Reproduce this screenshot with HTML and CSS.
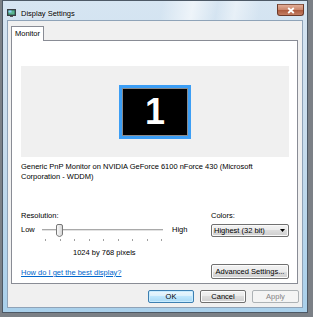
FILE: index.html
```html
<!DOCTYPE html>
<html>
<head>
<meta charset="utf-8">
<link rel="stylesheet" href="styles.css">
</head>
<body>
<div class="window">
  <div class="titlebar">
    <svg class="app-icon" width="9" height="8" viewBox="0 0 9 8"><rect x="0.5" y="0.5" width="8" height="6" fill="#2f5e52" stroke="#3a3f44"/><rect x="1.5" y="1.5" width="6" height="4" fill="#5bb58f"/><rect x="1.5" y="1.5" width="3" height="2" fill="#8fd0ff"/><rect x="3" y="7" width="3" height="1" fill="#555"/></svg>
    <span class="title">Display Settings</span>
    <div class="close"><svg width="8" height="7" viewBox="0 0 8 7"><path d="M1.2 1 L6.8 6 M6.8 1 L1.2 6" stroke="#fff" stroke-width="1.8"/></svg></div>
  </div>
  <div class="client">
    <div class="tabs"><div class="tab">Monitor</div></div>
    <div class="panel">
      <div class="preview"><div class="monitor">1</div></div>
      <p class="desc">Generic PnP Monitor on NVIDIA GeForce 6100 nForce 430 (Microsoft<br>Corporation - WDDM)</p>
      <div class="settings">
        <div class="res">
          <div class="label">Resolution:</div>
          <div class="slider-row">
            <span class="low">Low</span>
            <div class="slider">
              <svg class="thumb" width="7" height="13" viewBox="0 0 7 13"><defs><linearGradient id="tg" x1="0" y1="0" x2="1" y2="0"><stop offset="0" stop-color="#fdfdfd"/><stop offset="1" stop-color="#d2d2d2"/></linearGradient></defs><path d="M0.5 2 Q0.5 0.5 2 0.5 H5 Q6.5 0.5 6.5 2 V10 Q6.5 11 5.5 11.8 L3.5 12.5 L1.5 11.8 Q0.5 11 0.5 10 Z" fill="url(#tg)" stroke="#777"/></svg>
            </div>
            <span class="high">High</span>
          </div>
          <div class="ticks"><i></i><i></i><i></i><i></i><i></i><i></i><i></i><i></i><i></i></div>
          <div class="pixels">1024 by 768 pixels</div>
        </div>
        <div class="colors">
          <div class="label">Colors:</div>
          <div class="combo"><span>Highest (32 bit)</span><svg width="5" height="3" viewBox="0 0 5 3"><path d="M0 0H5L2.5 3Z" fill="#000"/></svg></div>
        </div>
      </div>
      <div class="footer-row">
        <a class="link" href="#">How do I get the best display?</a>
        <button class="btn adv">Advanced Settings...</button>
      </div>
    </div>
    <div class="buttons">
      <button class="btn default">OK</button>
      <button class="btn">Cancel</button>
      <button class="btn" disabled>Apply</button>
    </div>
  </div>
</div>
</body>
</html>
```

FILE: styles.css
```css
* { box-sizing: border-box; }
html, body { margin: 0; padding: 0; }
body {
  width: 313px;
  height: 317px;
  overflow: hidden;
  background: #7b8086;
  font-family: "Liberation Sans", Arial, sans-serif;
  font-size: 7.5px;
  line-height: 10px;
  color: #000;
}
.window {
  margin-left: 2px;
  width: 306px;
  height: 313px;
  border: 1px solid #4d5966;
  background: linear-gradient(180deg, #d6e5f2 0%, #c8dcec 45%, #a9d0eb 100%);
  display: flex;
  flex-direction: column;
}
.titlebar {
  height: 20px;
  display: flex;
  align-items: flex-start;
  padding: 0 3px 0 4px;
  background: linear-gradient(100deg, rgba(255,255,255,0) 52%, rgba(255,255,255,.6) 62%, rgba(255,255,255,0) 70%, rgba(255,255,255,.45) 76%, rgba(255,255,255,0) 84%);
}
.app-icon { margin-top: 8px; flex: none; }
.title { margin-top: 8px; margin-left: 5px; line-height: 10px; color: #000; text-shadow: 0 0 3px #fff; }
.close {
  margin-left: auto;
  margin-top: 3px;
  width: 27px;
  height: 12px;
  border: 1px solid #6b3a2a;
  border-top-color: #8a5a48;
  border-radius: 0 0 3px 3px;
  background: linear-gradient(180deg, #e2ad97 0%, #cd8a70 45%, #ad5c40 55%, #c47e63 100%);
  display: flex;
  align-items: center;
  justify-content: center;
}
.client {
  flex: 1;
  margin: 0 5px 5px;
  background: #f0f0f0;
  box-shadow: 0 0 0 1px #8fa3b8;
  padding: 5px 3px 4px 3px;
  display: flex;
  flex-direction: column;
}
.tabs { display: flex; height: 14px; }
.tab {
  position: relative;
  z-index: 1;
  height: 15px;
  padding: 0 3px;
  border: 1px solid #898c95;
  border-bottom: none;
  background: #fff;
  line-height: 13px;
}
.panel {
  margin-right: 1px;
  height: 244px;
  border: 1px solid #898c95;
  background: #fff;
  padding: 0 8px 4px 9px;
  display: flex;
  flex-direction: column;
}
.preview {
  margin-top: 25px;
  height: 91px;
  background: #f0f0f0;
  display: flex;
  align-items: center;
  justify-content: center;
}
.monitor {
  width: 72px;
  height: 54px;
  border: 3px solid #3c9ef5;
  background: #000;
  box-shadow: inset 0 0 0 1px #8a8a8a;
  display: flex;
  align-items: center;
  justify-content: center;
  color: #fff;
  font-family: "Liberation Sans", Arial, sans-serif;
  font-weight: bold;
  font-size: 36px;
  line-height: 1;
}
.desc { margin: 5px 0 0; }
.settings { margin-top: 29px; display: flex; justify-content: space-between; }
.res { display: flex; flex-direction: column; }
.slider-row { margin-top: 2px; height: 14px; display: flex; align-items: center; }
.low { width: 21px; }
.slider {
  width: 121px;
  height: 14px;
  display: flex;
  align-items: center;
  background:
    linear-gradient(#a9a9a9, #a9a9a9) 0 6px / 100% 1px no-repeat,
    linear-gradient(#e2e2e2, #e2e2e2) 0 7px / 100% 1px no-repeat;
}
.thumb { margin-left: 14px; }
.high { margin-left: 9px; }
.ticks {
  margin: 2px 0 0 24px;
  width: 117px;
  height: 2px;
  display: flex;
  justify-content: space-between;
}
.ticks i { width: 1px; height: 2px; background: #a0a0a0; }
.pixels { margin-top: 7px; padding-left: 52px; }
.colors { width: 78px; display: flex; flex-direction: column; }
.combo {
  margin-top: 3px;
  height: 13px;
  border: 1px solid #707070;
  border-radius: 2px;
  background: linear-gradient(#f2f2f2 0%, #ebebeb 50%, #dddddd 50%, #cfcfcf 100%);
  box-shadow: inset 0 0 0 1px #fafafa;
  display: flex;
  align-items: center;
  justify-content: space-between;
  padding: 0 3px 0 2px;
}
.footer-row { margin-top: 6px; display: flex; justify-content: space-between; align-items: flex-end; }
.link { color: #0066cc; text-decoration: underline; margin-bottom: 1px; }
.btn {
  font: inherit;
  height: 15px;
  padding: 0;
  margin: 0;
  border: 1px solid #707070;
  border-radius: 2px;
  background: linear-gradient(#f2f2f2 0%, #ebebeb 50%, #dddddd 50%, #cfcfcf 100%);
  box-shadow: inset 0 0 0 1px #fcfcfc;
  color: #000;
  line-height: 11px;
}
.adv { width: 78px; }
.buttons { margin-top: 6px; display: flex; justify-content: flex-end; gap: 6px; }
.buttons .btn { width: 46px; height: 13px; }
.buttons .btn:last-child { width: 47px; }
.btn.default {
  border-color: #3c7fb1;
  background: linear-gradient(#eaf6fd 0%, #d9f0fc 50%, #bee6fd 50%, #a7d9f5 100%);
  box-shadow: inset 0 0 0 1px #c8ecff;
}
.btn:disabled {
  border-color: #adb2b5;
  background: #f4f4f4;
  box-shadow: none;
  color: #838383;
}
```
